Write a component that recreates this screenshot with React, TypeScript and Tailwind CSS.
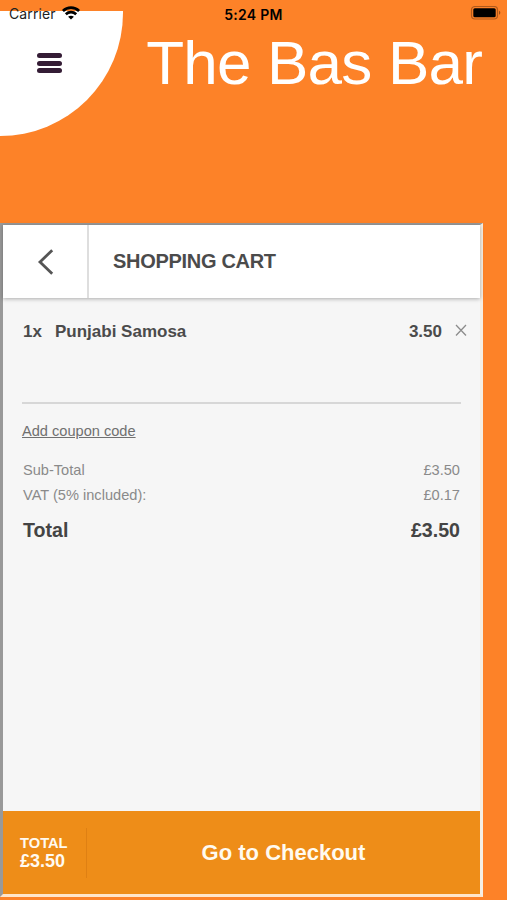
function StatusBar() {
  return (
    <div className="relative grid h-7 grid-cols-3 items-center px-[9px] font-[Inter,sans-serif] text-black">
      <div className="flex items-center gap-[6px]">
        <span className="text-[14px] leading-7 tracking-[0.1px] text-[#222]">Carrier</span>
        <svg className="-mt-[2px]" width="18" height="14" viewBox="0 0 18 14" fill="none" stroke="#000" strokeWidth="2.7">
          <path d="M.9 5C5.4.6 12.6.6 17.1 5" />
          <path d="M3.8 8.2c3-2.8 7.4-2.8 10.4 0" />
          <path d="M9 13.6 6.1 10.7c1.7-1.4 4.1-1.4 5.8 0z" fill="#000" stroke="none" />
        </svg>
      </div>
      <span className="text-center text-[14px] font-semibold tracking-[0.3px]">5:24 PM</span>
      <div className="-mt-[2px] -mr-[4px] flex justify-end">
        <svg width="32" height="14" viewBox="0 0 32 14">
          <rect x="1.5" y=".5" width="26" height="12.5" rx="3.5" fill="none" stroke="#b0591b" strokeWidth="1.2" />
          <rect x="3.3" y="2.2" width="22.4" height="9" rx="1.5" fill="#000" />
          <path d="M29 4.8c1.8.7 1.8 3.4 0 4z" fill="#9c4e18" />
        </svg>
      </div>
    </div>
  );
}

function Header() {
  return (
    <header className="relative h-[223px]">
      <div className="absolute top-[11px] left-0 h-[125px] w-[123px] rounded-br-full bg-white" />
      <StatusBar />
      <div className="relative flex justify-between pr-[25px] pl-[37px]">
        <button aria-label="Menu" className="mt-[25px] flex h-[20px] w-[25px] flex-col justify-between">
          <span className="h-[5px] w-full rounded-full bg-[#341c35]" />
          <span className="h-[5px] w-full rounded-full bg-[#341c35]" />
          <span className="h-[5px] w-full rounded-full bg-[#341c35]" />
        </button>
        <h1 className="text-[62px] leading-[69px] tracking-[-0.8px] whitespace-nowrap text-white">The Bas Bar</h1>
      </div>
    </header>
  );
}

function CartHeader() {
  return (
    <div className="flex h-[73px] shrink-0 bg-white shadow-[0_1px_4px_rgba(0,0,0,0.3)]">
      <button aria-label="Back" className="flex w-[86px] items-center justify-center border-r-2 border-[#dedede]">
        <svg width="18" height="28" viewBox="0 0 18 28" fill="none" stroke="#555" strokeWidth="2.8">
          <path d="M16.2 2.2 4 14l12.2 11.8" />
        </svg>
      </button>
      <h2 className="pl-6 text-[20px] leading-[73px] font-bold tracking-[-0.3px] text-[#4b4b4b]">SHOPPING CART</h2>
    </div>
  );
}

export default function App() {
  return (
    <div className="h-[900px] w-[507px] overflow-hidden bg-[#fd8228] font-['Liberation_Sans',Arial,sans-serif]">
      <Header />
      <main className="flex h-[674px] w-[483px] flex-col border-t-2 border-r-[3px] border-b-[3px] border-l-[3px] border-t-[#999] border-r-[#f5eee4] border-b-[#ffe5ca] border-l-[#999] bg-[#f6f6f6]">
        <CartHeader />
        <section className="flex-1 px-[19px] text-[#4b4b4b]">
          <div className="-mr-[7px] flex h-[105px] items-start pt-[24px] pl-px text-[17px] leading-5 font-bold">
            <span className="w-[32px]">1x</span>
            <span className="flex-1">Punjabi Samosa</span>
            <span>3.50</span>
            <svg className="mt-[2px] ml-[12px]" width="14" height="13" viewBox="0 0 14 13" fill="none" stroke="#8c8c8c" strokeWidth="1.3">
              <path d="m2 1 10 10.5M12 1 2 11.5" />
            </svg>
          </div>
          <div className="-mt-[1px] h-[2px] bg-[#d7d7d7]" />
          <a className="mt-[17px] block h-5 text-[14.6px] leading-5 text-[#707070] underline">Add coupon code</a>
          <dl className="mt-[18px] pr-px pl-px text-[14.6px] text-[#8a8a8a]">
            <div className="flex h-6 items-center justify-between">
              <dt>Sub-Total</dt>
              <dd>£3.50</dd>
            </div>
            <div className="flex h-[25px] items-center justify-between">
              <dt>VAT (5% included):</dt>
              <dd>£0.17</dd>
            </div>
            <div className="mt-[11px] flex h-6 items-center justify-between text-[19.6px] font-bold text-[#444]">
              <dt>Total</dt>
              <dd>£3.50</dd>
            </div>
          </dl>
        </section>
        <footer className="flex h-[83px] shrink-0 items-center bg-[#ee8d18] font-bold text-[#fffaf0]">
          <div className="flex h-[50px] w-[84px] flex-col justify-center border-r border-[#df8013] pl-[17px]">
            <span className="text-[14.7px] leading-[18px]">TOTAL</span>
            <span className="text-[18px] leading-[19px]">£3.50</span>
          </div>
          <button className="flex-1 text-center text-[22px]">Go to Checkout</button>
        </footer>
      </main>
    </div>
  );
}
